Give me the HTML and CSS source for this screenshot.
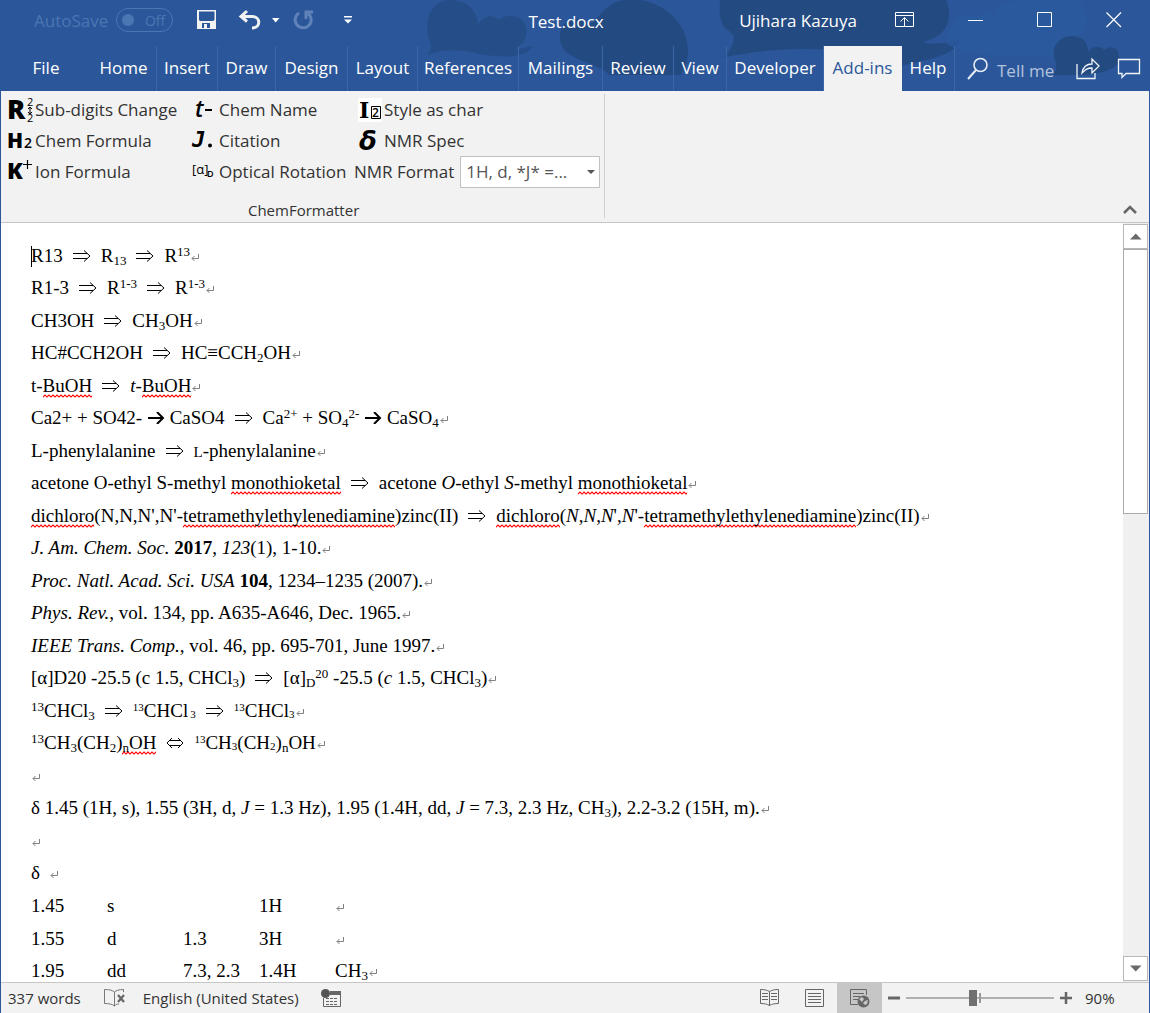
FILE: index.html
```html
<!DOCTYPE html>
<html lang="en">
<head>
<meta charset="utf-8">
<meta name="viewport" content="width=device-width, initial-scale=1">
<title>Test.docx</title>
<link rel="stylesheet" href="styles.css">
</head>
<body>
<svg class="defs" aria-hidden="true">
  <symbol id="implies" viewBox="0 0 18 12"><path d="M0 3.5H14M0 8.500H14M11 0.500L17 6L11 11.500" fill="none" stroke="#000"/></symbol>
  <symbol id="equiv" viewBox="0 0 18 12"><path d="M4 3.500H14M4 8.500H14M12 1L17 6L12 11M6 1L1 6L6 11" fill="none" stroke="#000"/></symbol>
  <symbol id="yields" viewBox="0 0 18 12"><path d="M1 6H16M10 0L16 6L10 12" fill="none" stroke="#000" stroke-width="2"/></symbol>
  <symbol id="mark" viewBox="0 0 8 8"><path d="M7.500 0V4.500H1M3.500 2L1 4.500L3.500 7" fill="none" stroke="#808080"/></symbol>
</svg>
<div class="app">
  <header class="header">
    <svg class="clouds" width="770" height="75" viewBox="0 0 770 75" aria-hidden="true">
      <g fill="#244a82">
        <path opacity=".75" d="M48 55C54 49 52 43 49 37C45 14 56 0 71 0C89 0 98 11 99 24C110 10 117 18 120 20C134 10 151 20 147 35C146 45 135 48 137 50C145 48 151 46 154 46C145 60 120 57 100 54C80 49 65 49 48 55Z"/>
        <path d="M184 48C175 32 188 14 202 20C208 23 211 26 217 20C225 8 236 0 247 0H262C290 5 309 27 309 50C309 60 306 68 302 75H230C224 65 190 60 184 48Z"/>
        <path d="M341 0H567C575 18 568 37 544 42C552 45 568 43 580 40C579 53 555 59 520 66C500 68 490 58 470 52C430 47 395 48 345 57C358 43 356 35 350 31C340 25 340 12 341 0Z"/>
        <path d="M674 75C678 70 678 65 676 60C671 46 681 36 694 36C704 37 709 42 709 52C715 45 722 46 725 50C734 43 741 50 740 59C740 71 716 75 700 75Z"/>
      </g>
      <path fill="#2b5aa0" opacity=".7" d="M567 44C575 8 595 12 598 19C604 10 612 8 615 18C616 3 630 0 645 0H700C718 25 700 36 694 36C678 36 671 48 676 60C650 48 606 65 567 44Z"/>
    </svg>
    <div class="titlebar">
      <div class="quick">
        <span class="autosave" id="autosave">AutoSave</span>
        <button class="toggle" aria-labelledby="autosave" disabled><i></i><span>Off</span></button>
        <button class="ic save" aria-label="Save"><svg width="20" height="20" viewBox="0 0 20 20"><path fill="#f2f2f2" fill-rule="evenodd" d="M0 0H19V19H0ZM2 1.500V10L3 11H16L17.500 10V1.500ZM5 13V18H7V14H10V18H13V13Z"/></svg></button>
        <button class="ic undo" aria-label="Undo"><svg width="22" height="20" viewBox="0 0 22 20"><path d="M8 1L2 6.500L8 11.500M3 6.500H13C22 6.500 22 18 13 18" fill="none" stroke="#f2f2f2" stroke-width="3"/></svg></button>
        <button class="ic more" aria-label="Undo list"><svg width="8" height="5" viewBox="0 0 8 5"><path fill="#fff" d="M0 0H7.500L3.700 4.500Z"/></svg></button>
        <button class="ic redo" aria-label="Repeat"><svg width="20" height="20" viewBox="0 0 20 20"><path d="M5 3A8 8 0 1 0 14 3.500M12 9V2H19" fill="none" stroke="#5f82b8" stroke-width="3"/></svg></button>
        <button class="ic" aria-label="Customize toolbar"><svg width="8" height="8" viewBox="0 0 8 8"><path fill="#fff" d="M0 0H8V1.500H0ZM0 3.500H8L4 7.500Z"/></svg></button>
      </div>
      <h1 class="title">Test.docx</h1>
      <div class="window">
        <span class="user">Ujihara Kazuya</span>
        <button class="ic" aria-label="Ribbon display options"><svg width="20" height="16" viewBox="0 0 20 16"><path d="M.5.5H18.500V14.500H.5ZM.5 3.500H18.500M9.500 14V6M5.500 9.500L9.500 5.500L13.500 9.500" fill="none" stroke="#fff"/></svg></button>
        <button class="ic" aria-label="Minimize"><svg width="16" height="16" viewBox="0 0 16 16"><path d="M0 8.500H15" stroke="#fff"/></svg></button>
        <button class="ic" aria-label="Maximize"><svg width="16" height="16" viewBox="0 0 16 16"><path d="M.5.5H14.500V14.500H.5Z" fill="none" stroke="#fff"/></svg></button>
        <button class="ic" aria-label="Close"><svg width="16" height="16" viewBox="0 0 16 16"><path d="M.5.5L15 15M15 .5L.5 15" stroke="#fff" stroke-width="1.200"/></svg></button>
      </div>
    </div>
    <nav class="tabs">
      <a class="file" href="#">File</a>
      <a href="#">Home</a><a href="#">Insert</a><a href="#">Draw</a><a href="#">Design</a><a href="#">Layout</a><a href="#">References</a><a href="#">Mailings</a><a href="#">Review</a><a href="#">View</a><a href="#">Developer</a><a class="active" href="#">Add-ins</a><a href="#">Help</a>
      <button class="tell"><svg width="22" height="24" viewBox="0 0 22 24"><circle cx="13.500" cy="8" r="6.500" fill="none" stroke="#e8edf5" stroke-width="1.600"/><path d="M9 13L1 22" stroke="#e8edf5" stroke-width="2"/></svg><span>Tell me</span></button>
      <div class="share">
        <button class="ic" aria-label="Share"><svg width="25" height="22" viewBox="0 0 25 22"><path d="M1 6V20.500H19V15M6 15C7 9 10 6 16 6V1L23 8L16 15V10C11 10 9 12 6 15Z" fill="none" stroke="#f2f5fa" stroke-width="1.300"/></svg></button>
        <button class="ic" aria-label="Comments"><svg width="23" height="20" viewBox="0 0 23 20"><path d="M.5.5H21.500V14.500H8L4 18.500V14.500H.5Z" fill="none" stroke="#f2f5fa" stroke-width="1.300"/></svg></button>
      </div>
    </nav>
  </header>

  <section class="ribbon" aria-label="Add-ins">
    <div class="group">
      <div class="commands">
        <div class="col first">
          <button class="cmd"><svg width="27" height="26" viewBox="0 0 27 26" aria-hidden="true"><text class="g heavy" x="0" y="22" font-size="27">R</text><text class="g" x="20" y="9" font-size="11">2</text><path d="M23 10V17M21 12L23 10L25 12M21 15L23 17L25 15" fill="none" stroke="#000"/><text class="g" x="20" y="25" font-size="11">2</text></svg>Sub-digits Change</button>
          <button class="cmd"><svg width="27" height="26" viewBox="0 0 27 26" aria-hidden="true"><text class="g heavy" x="0" y="20" font-size="21">H</text><text class="g semi" x="17" y="20" font-size="14">2</text></svg>Chem Formula</button>
          <button class="cmd"><svg width="27" height="26" viewBox="0 0 27 26" aria-hidden="true"><text class="g heavy" x="0" y="20" font-size="23">K</text><path d="M16 5.500H25M20.500 1V10" stroke="#000" stroke-width="1.200"/></svg>Ion Formula</button>
        </div>
        <div class="col second">
          <button class="cmd"><svg width="26" height="26" viewBox="0 0 26 26" aria-hidden="true"><text class="g semi" x="3" y="20" font-size="23" font-style="italic">t</text><path d="M13 13H20" stroke="#000" stroke-width="2"/></svg>Chem Name</button>
          <button class="cmd"><svg width="26" height="26" viewBox="0 0 26 26" aria-hidden="true"><text class="g mono" x="0" y="19" font-size="22" font-style="italic">J</text><circle cx="18" cy="17.500" r="2"/></svg>Citation</button>
          <button class="cmd"><svg width="26" height="26" viewBox="0 0 26 26" aria-hidden="true"><text class="g" x="0" y="15" font-size="13">[α]</text><text class="g semi" x="15" y="18" font-size="9">D</text></svg>Optical Rotation</button>
        </div>
        <div class="col">
          <button class="cmd inset"><svg width="25" height="24" viewBox="0 0 25 24" aria-hidden="true"><path fill="#fff" d="M0 0H24V24H0Z"/><text class="g slab" x="1" y="20" font-size="22">I</text><path d="M13.500 8.500H22.500V20.500H13.500Z" fill="none" stroke="#000"/><text class="g semi" x="14" y="19" font-size="12">2</text></svg>Style as char</button>
          <button class="cmd inset"><svg width="25" height="26" viewBox="0 0 25 26" aria-hidden="true"><text class="g dv" x="1" y="22" font-size="26" font-style="italic">δ</text></svg>NMR Spec</button>
          <div class="format"><label for="nmr">NMR Format</label>
            <span class="combo"><select id="nmr"><option>1H, d, *J* =...</option></select></span></div>
        </div>
      </div>
      <div class="groupname">ChemFormatter</div>
    </div>
    <button class="ic collapse" aria-label="Collapse the ribbon"><svg width="14" height="9" viewBox="0 0 14 9"><path d="M1 8L7 2L13 8" fill="none" stroke="#666" stroke-width="2.500"/></svg></button>
  </section>

  <div class="work">
    <main class="doc">
      <p><span class="caret"></span>R13<svg class="ar"><use href="#implies"/></svg>R<sub>13</sub><svg class="ar"><use href="#implies"/></svg>R<sup>13</sup><svg class="mk"><use href="#mark"/></svg></p>
      <p>R1-3<svg class="ar"><use href="#implies"/></svg>R<sup>1-3</sup><svg class="ar"><use href="#implies"/></svg>R<sup>1-3</sup><svg class="mk"><use href="#mark"/></svg></p>
      <p>CH3OH<svg class="ar"><use href="#implies"/></svg>CH<sub>3</sub>OH<svg class="mk"><use href="#mark"/></svg></p>
      <p>HC#CCH2OH<svg class="ar"><use href="#implies"/></svg>HC≡CCH<sub>2</sub>OH<svg class="mk"><use href="#mark"/></svg></p>
      <p>t-<span class="sp">BuOH</span><svg class="ar"><use href="#implies"/></svg><i>t</i>-<span class="sp">BuOH</span><svg class="mk"><use href="#mark"/></svg></p>
      <p>Ca2+ + SO42- <svg class="yl"><use href="#yields"/></svg> CaSO4<svg class="ar"><use href="#implies"/></svg>Ca<sup>2+</sup> + SO<sub>4</sub><sup>2-</sup> <svg class="yl"><use href="#yields"/></svg> CaSO<sub>4</sub><svg class="mk"><use href="#mark"/></svg></p>
      <p>L-phenylalanine<svg class="ar"><use href="#implies"/></svg><span class="sc">L</span>-phenylalanine<svg class="mk"><use href="#mark"/></svg></p>
      <p>acetone O-ethyl S-methyl <span class="sp">monothioketal</span><svg class="ar"><use href="#implies"/></svg>acetone <i>O</i>-ethyl <i>S</i>-methyl <span class="sp">monothioketal</span><svg class="mk"><use href="#mark"/></svg></p>
      <p><span class="sp">dichloro</span>(N,N,N',N'-<span class="sp">tetramethylethylenediamine</span>)zinc(II)<svg class="ar"><use href="#implies"/></svg><span class="sp">dichloro</span>(<i>N</i>,<i>N</i>,<i>N</i>',<i>N</i>'-<span class="sp">tetramethylethylenediamine</span>)zinc(II)<svg class="mk"><use href="#mark"/></svg></p>
      <p><i>J. Am. Chem. Soc.</i> <b>2017</b>, <i>123</i>(1), 1-10.<svg class="mk"><use href="#mark"/></svg></p>
      <p><i>Proc. Natl. Acad. Sci. USA</i> <b>104</b>, 1234–1235 (2007).<svg class="mk"><use href="#mark"/></svg></p>
      <p><i>Phys. Rev.</i>, vol. 134, pp. A635-A646, Dec. 1965.<svg class="mk"><use href="#mark"/></svg></p>
      <p><i>IEEE Trans. Comp.</i>, vol. 46, pp. 695-701, June 1997.<svg class="mk"><use href="#mark"/></svg></p>
      <p>[α]D20 -25.5 (c 1.5, CHCl<sub>3</sub>)<svg class="ar"><use href="#implies"/></svg>[α]<sub>D</sub><sup>20</sup> -25.5 (<i>c</i> 1.5, CHCl<sub>3</sub>)<svg class="mk"><use href="#mark"/></svg></p>
      <p><sup>13</sup>CHCl<sub>3</sub><svg class="ar"><use href="#implies"/></svg><sup class="sm">13</sup>CHCl<sub class="sm wide">3</sub><svg class="ar"><use href="#implies"/></svg><sup class="sm">13</sup>CHCl<sub class="sm">3</sub><svg class="mk"><use href="#mark"/></svg></p>
      <p><sup>13</sup>CH<sub>3</sub>(CH<sub>2</sub>)<span class="sp"><sub>n</sub>OH</span><svg class="ar"><use href="#equiv"/></svg><sup class="sm">13</sup>CH<sub class="sm">3</sub>(CH<sub class="sm">2</sub>)<sub>n</sub>OH<svg class="mk"><use href="#mark"/></svg></p>
      <p><svg class="mk"><use href="#mark"/></svg></p>
      <p>δ 1.45 (1H, s), 1.55 (3H, d, <i>J</i> = 1.3 Hz), 1.95 (1.4H, dd, <i>J</i> = 7.3, 2.3 Hz, CH<sub>3</sub>), 2.2-3.2 (15H, m).<svg class="mk"><use href="#mark"/></svg></p>
      <p><svg class="mk"><use href="#mark"/></svg></p>
      <p>δ &nbsp;<svg class="mk"><use href="#mark"/></svg></p>
      <table class="peaks">
        <tr><td>1.45</td><td>s</td><td></td><td>1H</td><td><svg class="mk"><use href="#mark"/></svg></td></tr>
        <tr><td>1.55</td><td>d</td><td>1.3</td><td>3H</td><td><svg class="mk"><use href="#mark"/></svg></td></tr>
        <tr><td>1.95</td><td>dd</td><td>7.3, 2.3</td><td>1.4H</td><td>CH<sub>3</sub><svg class="mk"><use href="#mark"/></svg></td></tr>
      </table>
    </main>
    <div class="scroll">
      <button aria-label="Scroll up"><svg width="12" height="7" viewBox="0 0 12 7"><path fill="#6a6a6a" d="M0 6.500H11.500L5.750.5Z"/></svg></button>
      <div class="thumb"></div>
      <button class="down" aria-label="Scroll down"><svg width="12" height="7" viewBox="0 0 12 7"><path fill="#6a6a6a" d="M0 .5H11.500L5.750 6.500Z"/></svg></button>
    </div>
  </div>

  <footer class="status">
    <span class="words">337 words</span>
    <svg class="proof" width="22" height="18" viewBox="0 0 22 18"><path d="M10.500 17V3C8 1 5 .5.5.5V14.500C5 14.500 8 15 10.500 17C12 15.500 13 15 15 15M10.500 3C12 1.500 15 .5 19.500 .5V3" fill="none" stroke="#777"/><path d="M14 6L20 13M20 6L14 13" stroke="#666" stroke-width="2.200"/></svg>
    <span class="lang">English (United States)</span>
    <svg width="20" height="19" viewBox="0 0 20 19"><path d="M2.500 9V17.500H19.500V4" fill="none" stroke="#666"/><path fill="#666" d="M9 2H20V6H9Z"/><circle cx="4.500" cy="4.500" r="4.500" fill="#555"/><path d="M5 9.500H17M5 12.500H17M5 15.500H17" stroke="#666" stroke-dasharray="3 1"/></svg>
    <div class="views">
      <button aria-label="Read Mode"><svg width="20" height="18" viewBox="0 0 20 18"><path d="M9.500 17V2.500C7 1 4 .5.5.5V14.500C4 14.500 7 15 9.500 16.500C12 15 15 14.500 18.500 14.500V.5C15 .5 12 1 9.500 2.500M2 4.500H8M2 7.500H8M2 10.500H8M11 4.500H17M11 7.500H17M11 10.500H17" fill="none" stroke="#666"/></svg></button>
      <button aria-label="Print Layout"><svg width="20" height="18" viewBox="0 0 20 18"><path d="M.5.5H18.500V17.500H.5ZM3 4.500H16M3 7.500H16M3 10.500H16M3 13.500H16" fill="none" stroke="#666"/></svg></button>
      <button class="on" aria-label="Web Layout"><svg width="20" height="19" viewBox="0 0 20 19"><path d="M8 15.500H.5V.5H16.500V6M3 4.500H14M3 7.500H10M3 10.500H8" fill="none" stroke="#666"/><circle cx="13.500" cy="12.500" r="6" fill="#666"/><path fill="#c6c6c6" d="M9 10L12 8L14 10L12 13ZM15 12L18 11L17 15L15 16L13 14Z"/></svg></button>
    </div>
    <button class="zoombtn" aria-label="Zoom out"><svg width="12" height="12" viewBox="0 0 12 12"><path d="M0 6H12" stroke="#666" stroke-width="3"/></svg></button>
    <input class="zoom" type="range" min="0" max="100" value="45" aria-label="Zoom">
    <button class="zoombtn" aria-label="Zoom in"><svg width="12" height="12" viewBox="0 0 12 12"><path d="M0 6H12M6 0V12" stroke="#666" stroke-width="2.500"/></svg></button>
    <span class="percent">90%</span>
  </footer>
</div>
</body>
</html>
```
FILE: styles.css
```css
* { box-sizing: border-box; }
body { margin: 0; font-family: "Open Sans", "Noto Sans", sans-serif; color: #333; }
button { border: 0; padding: 0; background: none; font: inherit; color: inherit; display: flex; align-items: center; }
svg { flex: none; overflow: visible; }
.defs { display: none; }
.app { height: 100vh; display: flex; flex-direction: column; border: solid #2b579a; border-width: 0 1px; overflow: hidden; }

/* title bar and tabs */
.header { position: relative; background: #2b579a; color: #fff; font-size: 17px; }
.clouds { position: absolute; right: 0; top: 0; }
.titlebar { position: relative; height: 46px; padding-bottom: 6px; display: grid; grid-template-columns: minmax(0, 1fr) auto minmax(0, 1fr); align-items: center; padding-right: 18px; }
.quick { display: flex; align-items: center; padding-left: 33px; }
.autosave { color: #4a76b2; font-size: 17px; }
.toggle { width: 57px; height: 24px; border: 1px solid #4a76b2; border-radius: 12px; margin: 0 24px 0 8px; padding: 0 7px 0 5px; justify-content: space-between; font-size: 14px; color: #4a76b2; }
.toggle i { width: 12px; height: 12px; border-radius: 50%; background: #4a76b2; }
.save { margin-right: 22px; }
.undo { margin-right: 11px; }
.more { margin-right: 14px; }
.redo { margin-right: 30px; }
.title { margin: 2px 0 0; font-size: 17px; font-weight: 400; }
.window { display: flex; align-items: center; justify-content: flex-end; gap: 53px; margin-right: 9px; }
.user { margin-right: -15px; }
.tabs { position: relative; display: grid; grid-template-columns: 90px 66px 61px 58px 72px 70px 101px 84px 71px 53px 97px 78px 53px auto 1fr; height: 45px; }
.tabs a { color: #fff; text-decoration: none; display: flex; align-items: center; justify-content: center; padding-bottom: 2px; border-right: 1px solid #3c67a6; }
.tabs a.file { border: 0; }
.tabs a.active { background: #f2f2f2; color: #2b579a; border-color: #f2f2f2; }
.tell { gap: 8px; margin-left: 12px; color: #b4c4de; white-space: nowrap; }
.tell span { padding-top: 3px; }
.share { display: flex; align-items: center; justify-content: flex-end; gap: 17px; padding-right: 8px; }

/* ribbon */
.ribbon { display: flex; justify-content: space-between; align-items: flex-end; height: 132px; background: #f2f2f2; border-bottom: 1px solid #c6c6c6; padding: 3px 0 4px; font-size: 17px; }
.group { height: 124px; border-right: 1px solid #d0d0d0; padding: 0 4px 0 6px; }
.commands { display: flex; }
.col { display: flex; flex-direction: column; }
.first { width: 185px; }
.second { width: 155px; }
.cmd { height: 31px; gap: 1px; white-space: nowrap; }
.inset { padding-left: 11px; gap: 1px; }
.format { display: flex; align-items: center; gap: 6px; height: 31px; padding-left: 7px; white-space: nowrap; }
.combo { position: relative; display: flex; }
.combo::after { content: ""; position: absolute; right: 5px; top: 14px; border: 4px solid transparent; border-top-color: #555; border-bottom: 0; }
.combo select { appearance: none; width: 140px; height: 32px; border: 1px solid #c0c0c0; border-radius: 0; background: #fff; font: inherit; color: #555; padding: 0 5px; }
.groupname { text-align: center; font-size: 15px; line-height: 20px; padding-top: 13px; }
.g { fill: #000; font-family: "Open Sans", sans-serif; }
.heavy { font-weight: 800; }
.semi { font-weight: 600; }
.dv { font-family: "DejaVu Sans", sans-serif; font-weight: 700; }
.mono { font-family: "DejaVu Sans Mono", monospace; font-weight: 700; }
.slab { font-family: "DejaVu Serif", serif; font-weight: 700; }
.collapse { margin: 0 12px 4px 0; }

/* document */
.work { flex: 1; min-height: 0; display: flex; background: #fff; }
.doc { flex: 1; min-width: 0; overflow: hidden; padding: 17px 0 0 30px; font: 19px/32px "Liberation Serif", serif; color: #000; white-space: nowrap; }
.doc p { margin: 0; height: 32px; }
.doc p:nth-child(even), .peaks tr:nth-child(even) { height: 33px; }
sub, sup { font-size: 13px; line-height: 0; }
sub { vertical-align: -3px; }
sup { vertical-align: 6px; }
.sm { font-size: 11px; }
sub.sm { vertical-align: -1px; }
.wide { margin-left: 2px; }
.sc { font-size: 15px; }
.ar { width: 18px; height: 12px; margin: 0 10px; }
.yl { width: 18px; height: 12px; }
.mk { width: 8px; height: 8px; margin-left: 1px; }
.sp { padding-bottom: 2px; background: url("data:image/svg+xml,%3Csvg xmlns='http://www.w3.org/2000/svg' width='4' height='4'%3E%3Cpath d='M-1 4L2 1L5 4' fill='none' stroke='%23f00' stroke-width='1.200'/%3E%3C/svg%3E") repeat-x left bottom; }
.caret { display: inline-block; width: 1px; height: 21px; margin-right: -1px; vertical-align: -5px; background: #000; }
.peaks { border-collapse: collapse; table-layout: fixed; width: 380px; }
.peaks td { padding: 0; width: 76px; height: 32px; }
.scroll { width: 26px; background: #f0f0f0; display: flex; flex-direction: column; padding: 1px 1px 1px 0; }
.scroll button { height: 25px; border: 1px solid #b8b8b8; background: #fff; justify-content: center; }
.thumb { height: 35%; background: #fff; border: 1px solid #ababab; }
.scroll .down { margin-top: auto; }

/* status bar */
.status { height: 31px; display: flex; align-items: center; background: #f2f2f2; border-top: 1px solid #c6c6c6; font-size: 15px; padding-left: 7px; }
.words { margin-right: 23px; }
.proof { margin-right: 17px; }
.lang { margin-right: 22px; }
.views { margin-left: auto; display: flex; height: 100%; }
.views button { width: 45px; justify-content: center; }
.views .on { background: #c6c6c6; }
.zoombtn { margin: 0 6px; }
.zoom { appearance: none; width: 148px; height: 16px; margin: 0; background: linear-gradient(#999, #999) 73px center / 2px 10px no-repeat, linear-gradient(#b0b0b0, #b0b0b0) left center / 100% 2px no-repeat; }
.zoom::-webkit-slider-thumb { appearance: none; width: 8px; height: 16px; background: #707070; }
.percent { width: 71px; padding-left: 7px; }
```
